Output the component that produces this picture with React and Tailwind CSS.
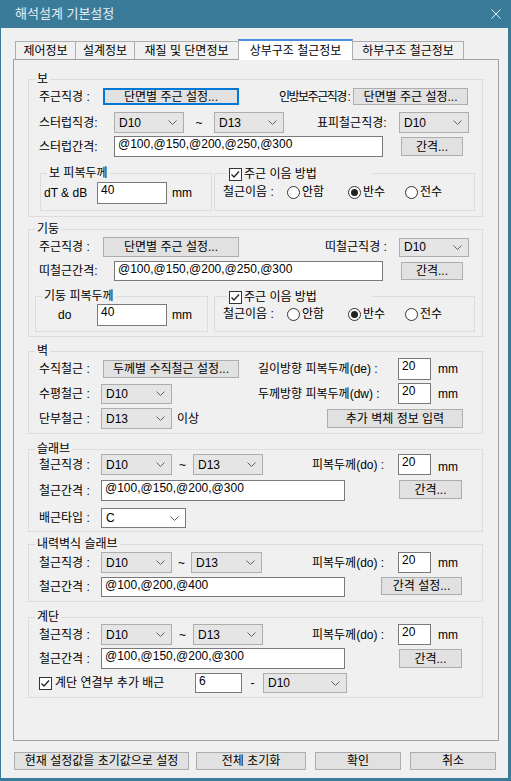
import React from "react";

// ---------- small win32-ish controls ----------
function Btn({ className = "", focus, children }) {
  return (
    <div
      className={
        "flex items-center justify-center whitespace-nowrap bg-[#e1e1e1] " +
        (focus ? "border-2 border-[#0078d7] " : "border border-[#adadad] ") +
        className
      }
    >
      {children}
    </div>
  );
}

function Chevron() {
  return (
    <svg width="9" height="5" viewBox="0 0 9 5" className="shrink-0">
      <polyline points="0.5,0.5 4.5,4.5 8.5,0.5" fill="none" stroke="#606060" strokeWidth="1" />
    </svg>
  );
}

function Combo({ className = "", white, children }) {
  return (
    <div
      className={
        "flex items-center justify-between pl-[4px] pr-[6px] border " +
        (white ? "bg-white border-[#7a7a7a] " : "bg-[#e5e5e5] border-[#adadad] ") +
        className
      }
    >
      <span>{children}</span>
      <Chevron />
    </div>
  );
}

function Input({ className = "", children }) {
  return (
    <div className={"flex items-start pl-[3px] pt-[1px] leading-[13px] bg-white border border-[#7a7a7a] " + className}>
      {children}
    </div>
  );
}

function Check() {
  return (
    <svg width="13" height="13" viewBox="0 0 13 13" className="shrink-0">
      <rect x="0.5" y="0.5" width="12" height="12" fill="#fff" stroke="#333" />
      <polyline points="2.5,6.5 5,9 10,3.5" fill="none" stroke="#222" strokeWidth="1.3" />
    </svg>
  );
}

function Radio({ on }) {
  return (
    <svg width="13" height="13" viewBox="0 0 13 13" className="shrink-0">
      <circle cx="6.5" cy="6.5" r="6" fill="#fff" stroke="#333" />
      {on && <circle cx="6.5" cy="6.5" r="3.5" fill="#222" />}
    </svg>
  );
}

function Group({ label, className = "", children }) {
  return (
    <div className={"relative border border-[#dcdcdc] flex flex-col " + className}>
      <span className="absolute -top-[8px] left-[6px] px-[2px] bg-[#f0f0f0] leading-[14px] whitespace-nowrap">
        {label}
      </span>
      {children}
    </div>
  );
}

// group with a checkbox as its caption
function CheckGroup({ className = "", children }) {
  return (
    <div className={"relative border border-[#dcdcdc] flex flex-col " + className}>
      <span className="absolute -top-[7px] left-[12px] w-[146px] pl-[2px] bg-[#f0f0f0] flex items-center gap-[2px] leading-[14px]">
        <Check />
        주근 이음 방법
      </span>
      {children}
    </div>
  );
}

function Splice({ className = "" }) {
  return (
    <div className={"flex items-center h-[16px] pl-[8px] " + className}>
      <span className="w-[64px]">철근이음 :</span>
      <span className="w-[61px] flex items-center gap-[2px]">
        <Radio />
        안함
      </span>
      <span className="w-[57px] flex items-center gap-[2px]">
        <Radio on />
        반수
      </span>
      <span className="flex items-center gap-[2px]">
        <Radio />
        전수
      </span>
    </div>
  );
}

const TABS = [
  { name: "제어정보", w: "w-[61px]" },
  { name: "설계정보", w: "w-[60px]" },
  { name: "재질 및 단면정보", w: "w-[105px]" },
  { name: "상부구조 철근정보", w: "w-[115px]", active: true },
  { name: "하부구조 철근정보", w: "w-[112px]" },
];

export default function App() {
  return (
    <div className="w-[511px] h-[781px] bg-[#3b7b9a] flex flex-col pl-[1px] pr-[3px] pb-[3px] text-[12px] leading-[14px] text-black font-['Liberation_Sans','Noto_Sans_CJK_KR',sans-serif]">
      {/* title bar */}
      <div className="h-[28px] shrink-0 flex items-center justify-between text-[#e8eff3]">
        <span className="ml-[14px] text-[13px]">해석설계 기본설정</span>
        <svg width="10" height="10" viewBox="0 0 10 10" className="mr-[7px]">
          <path d="M0.5 0.5 L9.5 9.5 M9.5 0.5 L0.5 9.5" stroke="#e8eff3" strokeWidth="1" />
        </svg>
      </div>

      <div className="flex-1 bg-[#f0f0f0] flex flex-col">
        {/* tabs */}
        <div className="mt-[11px] ml-[14px] h-[20px] flex items-end">
          {TABS.map((t, i) =>
            t.active ? (
              <div
                key={t.name}
                className={
                  t.w +
                  " -ml-[1px] h-[21px] -mb-[1px] relative z-10 bg-white border-x border-[#adadad] border-t-2 border-t-[#4a8fe0] flex items-center justify-center whitespace-nowrap"
                }
              >
                {t.name}
              </div>
            ) : (
              <div
                key={t.name}
                className={
                  t.w +
                  (i ? " -ml-[1px]" : "") +
                  " h-[18px] bg-[#f0f0f0] border-x border-t border-[#adadad] flex items-center justify-center whitespace-nowrap"
                }
              >
                {t.name}
              </div>
            )
          )}
        </div>

        {/* tab panel */}
        <div className="ml-[12px] w-[486px] h-[682px] border border-[#a0a0a0] flex flex-col pl-[14px]">
          {/* 보 */}
          <Group label="보" className="mt-[19px] w-[455px] h-[138px] pl-[10px]">
            <div className="mt-[8px] h-[17px] flex items-center">
              <span className="w-[64px]">주근직경 :</span>
              <Btn focus className="w-[136px] h-[17px]">단면별 주근 설정...</Btn>
              <span className="ml-[40px] w-[74px] whitespace-nowrap tracking-[-1.5px]">인방보주근직경 :</span>
              <Btn className="w-[115px] h-[17px]">단면별 주근 설정...</Btn>
            </div>
            <div className="mt-[7px] h-[21px] flex items-center">
              <span className="w-[75px]">스터럽직경:</span>
              <Combo className="w-[70px] h-[21px]">D10</Combo>
              <span className="w-[30px] text-center">~</span>
              <Combo className="w-[70px] h-[21px]">D13</Combo>
              <span className="ml-[33px] w-[82px]">표피철근직경:</span>
              <Combo className="w-[70px] h-[21px]">D10</Combo>
            </div>
            <div className="mt-[3px] h-[21px] flex items-center">
              <span className="w-[75px]">스터럽간격:</span>
              <Input className="w-[269px] h-[21px]">@100,@150,@200,@250,@300</Input>
              <Btn className="ml-[18px] w-[62px] h-[19px]">간격...</Btn>
            </div>
            <div className="mt-[16px] flex">
              <Group label="보 피복두께" className="ml-[1px] w-[172px] h-[38px]">
                <div className="mt-[8px] h-[22px] pl-[3px] flex items-center">
                  <span className="w-[53px]">dT &amp; dB</span>
                  <Input className="w-[70px] h-[22px]">40</Input>
                  <span className="ml-[5px]">mm</span>
                </div>
              </Group>
              <CheckGroup className="ml-[2px] w-[261px] h-[38px]">
                <Splice className="mt-[10px]" />
              </CheckGroup>
            </div>
          </Group>

          {/* 기둥 */}
          <Group label="기둥" className="mt-[12px] w-[455px] h-[108px] pl-[10px]">
            <div className="mt-[7px] h-[20px] flex items-center">
              <span className="w-[64px]">주근직경 :</span>
              <Btn className="w-[136px] h-[20px]">단면별 주근 설정...</Btn>
              <span className="ml-[86px] w-[74px]">띠철근직경 :</span>
              <Combo className="w-[70px] h-[19px]">D10</Combo>
            </div>
            <div className="mt-[4px] h-[20px] flex items-center">
              <span className="w-[75px]">띠철근간격:</span>
              <Input className="w-[269px] h-[20px]">@100,@150,@200,@250,@300</Input>
              <Btn className="ml-[18px] w-[62px] h-[18px]">간격...</Btn>
            </div>
            <div className="mt-[15px] flex">
              <Group label="기둥 피복두께" className="-ml-[4px] w-[173px] h-[36px]">
                <div className="mt-[7px] h-[22px] pl-[22px] flex items-center">
                  <span className="w-[39px]">do</span>
                  <Input className="w-[70px] h-[22px]">40</Input>
                  <span className="ml-[5px]">mm</span>
                </div>
              </Group>
              <CheckGroup className="ml-[6px] w-[261px] h-[36px]">
                <Splice className="mt-[9px]" />
              </CheckGroup>
            </div>
          </Group>

          {/* 벽 */}
          <Group label="벽" className="mt-[14px] w-[455px] h-[83px] pl-[10px]">
            <div className="mt-[6px] h-[22px] flex items-center">
              <span className="w-[64px]">수직철근 :</span>
              <Btn className="w-[136px] h-[18px]">두께별 수직철근 설정...</Btn>
              <span className="ml-[19px] w-[140px] whitespace-nowrap">길이방향 피복두께(de) :</span>
              <Input className="w-[33px] h-[22px]">20</Input>
              <span className="ml-[7px]">mm</span>
            </div>
            <div className="mt-[3px] h-[21px] flex items-center">
              <span className="w-[62px]">수평철근 :</span>
              <Combo className="w-[71px] h-[20px]">D10</Combo>
              <span className="ml-[86px] w-[140px] whitespace-nowrap">두께방향 피복두께(dw) :</span>
              <Input className="w-[33px] h-[21px]">20</Input>
              <span className="ml-[7px]">mm</span>
            </div>
            <div className="mt-[4px] h-[21px] flex items-center">
              <span className="w-[62px]">단부철근 :</span>
              <Combo className="w-[71px] h-[21px]">D13</Combo>
              <span className="ml-[5px]">이상</span>
              <Btn className="ml-auto mr-[19px] w-[136px] h-[19px]">추가 벽체 정보 입력</Btn>
            </div>
          </Group>

          {/* 슬래브 */}
          <Group label="슬래브" className="mt-[15px] w-[455px] h-[83px] pl-[10px]">
            <div className="mt-[4px] h-[21px] flex items-center">
              <span className="w-[62px]">철근직경 :</span>
              <Combo className="w-[71px] h-[21px]">D10</Combo>
              <span className="w-[21px] text-center">~</span>
              <Combo className="w-[70px] h-[21px]">D13</Combo>
              <span className="ml-[49px] w-[86px] whitespace-nowrap">피복두께(do) :</span>
              <Input className="w-[33px] h-[21px]">20</Input>
              <span className="ml-[7px] mt-[4px]">mm</span>
            </div>
            <div className="mt-[5px] h-[21px] flex items-start">
              <span className="w-[62px] self-center">철근간격 :</span>
              <Input className="w-[244px] h-[21px]">@100,@150,@200,@300</Input>
              <Btn className="ml-[54px] w-[63px] h-[19px]">간격...</Btn>
            </div>
            <div className="mt-[7px] h-[20px] flex items-center">
              <span className="w-[62px]">배근타입 :</span>
              <Combo white className="w-[85px] h-[20px]">C</Combo>
            </div>
          </Group>

          {/* 내력벽식 슬래브 */}
          <Group label="내력벽식 슬래브" className="mt-[12px] w-[455px] h-[58px] pl-[10px]">
            <div className="mt-[7px] h-[21px] flex items-center">
              <span className="w-[62px]">철근직경 :</span>
              <Combo className="w-[71px] h-[21px]">D10</Combo>
              <span className="w-[19px] text-center">~</span>
              <Combo className="w-[71px] h-[21px]">D13</Combo>
              <span className="ml-[50px] w-[86px] whitespace-nowrap">피복두께(do) :</span>
              <Input className="w-[33px] h-[21px]">20</Input>
              <span className="ml-[7px]">mm</span>
            </div>
            <div className="mt-[4px] h-[20px] flex items-start">
              <span className="w-[62px] self-center">철근간격 :</span>
              <Input className="w-[244px] h-[20px]">@100,@200,@400</Input>
              <Btn className="ml-[36px] w-[81px] h-[18px]">간격 설정...</Btn>
            </div>
          </Group>

          {/* 계단 */}
          <Group label="계단" className="mt-[15px] w-[455px] h-[81px] pl-[10px]">
            <div className="mt-[6px] h-[21px] flex items-center">
              <span className="w-[62px]">철근직경 :</span>
              <Combo className="w-[71px] h-[21px]">D10</Combo>
              <span className="w-[21px] text-center">~</span>
              <Combo className="w-[70px] h-[21px]">D13</Combo>
              <span className="ml-[49px] w-[86px] whitespace-nowrap">피복두께(do) :</span>
              <Input className="w-[33px] h-[21px]">20</Input>
              <span className="ml-[7px]">mm</span>
            </div>
            <div className="mt-[3px] h-[21px] flex items-center">
              <span className="w-[62px]">철근간격 :</span>
              <Input className="w-[244px] h-[21px]">@100,@150,@200,@300</Input>
              <Btn className="ml-[54px] w-[63px] h-[19px]">간격...</Btn>
            </div>
            <div className="mt-[4px] h-[20px] flex items-center">
              <span className="w-[156px] flex items-center gap-[3px]">
                <Check />
                계단 연결부 추가 배근
              </span>
              <Input className="w-[47px] h-[20px]">6</Input>
              <span className="w-[21px] text-center">-</span>
              <Combo className="w-[84px] h-[20px]">D10</Combo>
            </div>
          </Group>
        </div>

        {/* dialog buttons */}
        <div className="mt-[11px] ml-[13px] flex">
          <Btn className="w-[175px] h-[18px]">현재 설정값을 초기값으로 설정</Btn>
          <Btn className="ml-[7px] w-[110px] h-[18px]">전체 초기화</Btn>
          <Btn className="ml-[9px] w-[86px] h-[18px]">확인</Btn>
          <Btn className="ml-[9px] w-[86px] h-[18px]">취소</Btn>
        </div>
      </div>
    </div>
  );
}
